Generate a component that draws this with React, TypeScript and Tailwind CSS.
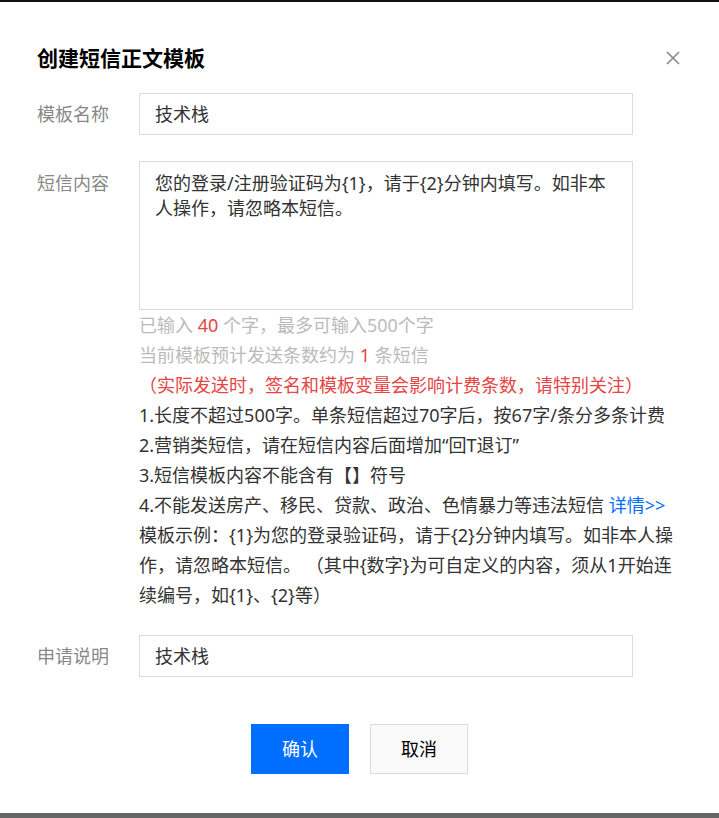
import React from "react";

const FONT = "font-['Noto_Sans','Noto_Sans_CJK_SC',sans-serif]";

const FormRow: React.FC<{ label: string; children: React.ReactNode; top?: boolean }> = ({
  label,
  children,
  top,
}) => (
  <div className="flex">
    <div
      className={
        top
          ? "w-[102px] shrink-0 pt-[10px] leading-[25px] text-[18px] text-[#888]"
          : "w-[102px] shrink-0 leading-[42px] text-[18px] text-[#888]"
      }
    >
      {label}
    </div>
    <div className="flex-1">{children}</div>
  </div>
);

const TextInput: React.FC<{ value: string }> = ({ value }) => (
  <div className="w-[494px] h-[42px] border border-[#dcdcdc] px-[15px] leading-[40px] text-[18px] text-[#333]">
    {value}
  </div>
);

const App: React.FC = () => {
  return (
    <div className={`w-[719px] h-[818px] bg-white flex flex-col ${FONT}`}>
      <div className="h-[2px] bg-[#111]" />
      <div className="flex-1 px-[37px] pt-[41px]">
        <div className="flex items-center justify-between h-[30px]">
          <h1 className="text-[21px] font-bold text-black leading-[30px]">创建短信正文模板</h1>
          <svg width="16" height="16" viewBox="0 0 16 16" className="mr-[1px]">
            <path d="M2 2 L14 14 M14 2 L2 14" stroke="#888" strokeWidth="1.6" fill="none" />
          </svg>
        </div>

        <div className="mt-[20px]">
          <FormRow label="模板名称">
            <TextInput value="技术栈" />
          </FormRow>
        </div>

        <div className="mt-[26px]">
          <FormRow label="短信内容" top>
            <div className="w-[494px] h-[149px] border border-[#dcdcdc] px-[15px] pt-[9px] leading-[25px] text-[18px] text-[#333]">
              您的登录/注册验证码为{"{1}"}，请于{"{2}"}分钟内填写。如非本
              <br />
              人操作，请忽略本短信。
            </div>
            <div className="whitespace-nowrap text-[18px] leading-[30px] text-[#333]">
              <p className="text-[#bbb]">
                已输入 <span className="text-[#e54545]">40</span> 个字，最多可输入500个字
              </p>
              <p className="text-[#bbb]">
                当前模板预计发送条数约为 <span className="text-[#e54545]">1</span> 条短信
              </p>
              <p className="text-[#e54545]">（实际发送时，签名和模板变量会影响计费条数，请特别关注）</p>
              <p>1.长度不超过500字。单条短信超过70字后，按67字/条分多条计费</p>
              <p>2.营销类短信，请在短信内容后面增加“回T退订”</p>
              <p>3.短信模板内容不能含有【】符号</p>
              <p>
                4.不能发送房产、移民、贷款、政治、色情暴力等违法短信{" "}
                <a className="text-[#006eff]">详情&gt;&gt;</a>
              </p>
              <p>模板示例：{"{1}"}为您的登录验证码，请于{"{2}"}分钟内填写。如非本人操</p>
              <p>作，请忽略本短信。 （其中{"{数字}"}为可自定义的内容，须从1开始连</p>
              <p>续编号，如{"{1}"}、{"{2}"}等）</p>
            </div>
          </FormRow>
        </div>

        <div className="mt-[25px]">
          <FormRow label="申请说明">
            <TextInput value="技术栈" />
          </FormRow>
        </div>

        <div className="mt-[47px] flex justify-center gap-[21px]">
          <button className="w-[98px] h-[50px] bg-[#006eff] text-white text-[18px]">确认</button>
          <button className="w-[98px] h-[50px] bg-[#fafafa] border border-[#dcdcdc] text-black text-[18px]">
            取消
          </button>
        </div>
      </div>
      <div className="h-[5px] bg-[#666]" />
    </div>
  );
};

export default App;
